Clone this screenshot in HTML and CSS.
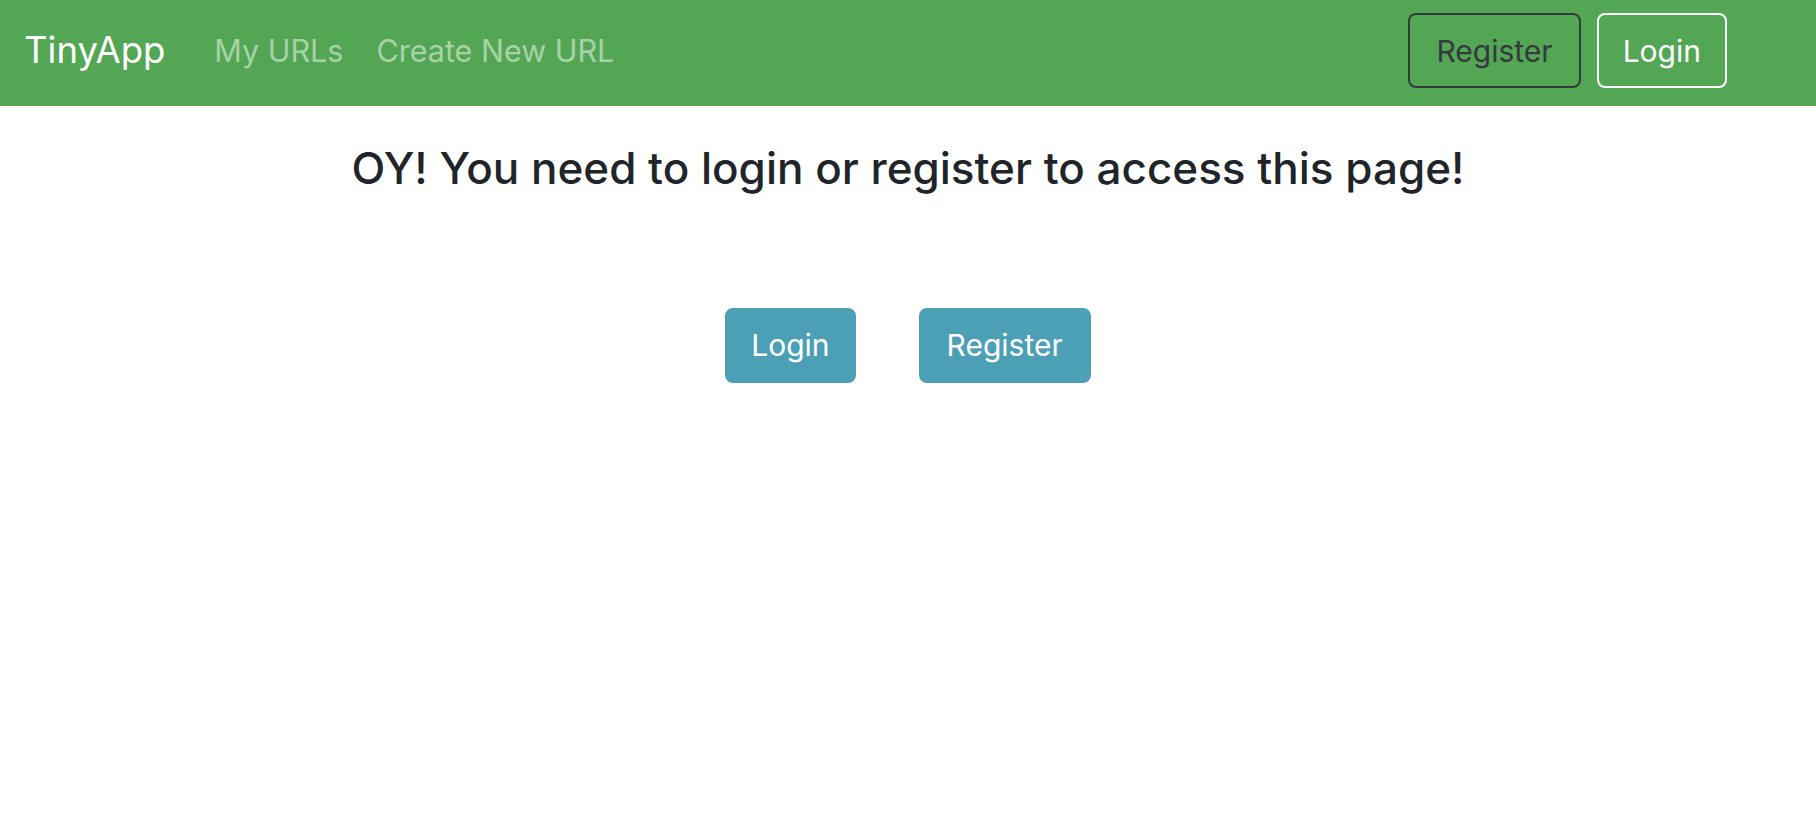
FILE: index.html
```html
<!DOCTYPE html>
<html lang="en">
<head>
<meta charset="utf-8">
<title>TinyApp</title>
<link rel="stylesheet" href="styles.css">
</head>
<body>
<nav class="navbar">
  <a class="brand" href="#">TinyApp</a>
  <div class="nav-links">
    <a class="nav-link" href="#">My URLs</a>
    <a class="nav-link" href="#">Create New URL</a>
  </div>
  <div class="nav-actions">
    <button class="btn btn-outline-dark">Register</button>
    <button class="btn btn-outline-light">Login</button>
  </div>
</nav>
<main class="main">
  <h3 class="title">OY! You need to login or register to access this page!</h3>
  <div class="actions">
    <button class="btn btn-info btn-narrow">Login</button>
    <button class="btn btn-info">Register</button>
  </div>
</main>
</body>
</html>
```
FILE: styles.css
```css
* { box-sizing: border-box; }
html, body { margin: 0; padding: 0; }
body {
  font-family: Inter, "Noto Sans", "Liberation Sans", sans-serif;
  color: #212529;
  background: #fff;
  width: 1816px;
  height: 836px;
  overflow: hidden;
}
.navbar {
  height: 106px;
  background: #53a653;
  display: flex;
  align-items: center;
  padding: 0 89px 5px 24px;
}
.brand {
  color: #fff;
  text-decoration: none;
  font-size: 36.5px;
  line-height: 1;
  margin-right: 49px;
}
.nav-links {
  display: flex;
  gap: 33px;
  flex: 1;
}
.nav-link {
  color: rgba(255, 255, 255, 0.5);
  text-decoration: none;
  font-size: 30.5px;
}
.nav-actions {
  display: flex;
  gap: 16px;
}
.btn {
  font-family: inherit;
  font-size: 30px;
  height: 75px;
  padding: 0 26px;
  border-radius: 8px;
  border: 2px solid transparent;
  background: transparent;
  cursor: pointer;
  line-height: 1;
}
.btn-narrow {
  padding: 0 24px;
}
.btn-outline-dark {
  color: #343a40;
  border-color: #343a40;
}
.btn-outline-light {
  color: #fff;
  border-color: #fff;
  padding: 0 24px;
}
.btn-info {
  background: #4ca0b6;
  border-color: #4ca0b6;
  color: #fff;
}
.main {
  display: flex;
  flex-direction: column;
  align-items: center;
}
.title {
  margin: 36px 0 0;
  font-size: 44px;
  font-weight: 500;
  line-height: 1.2;
}
.actions {
  display: flex;
  gap: 63px;
  margin-top: 113px;
}
```
